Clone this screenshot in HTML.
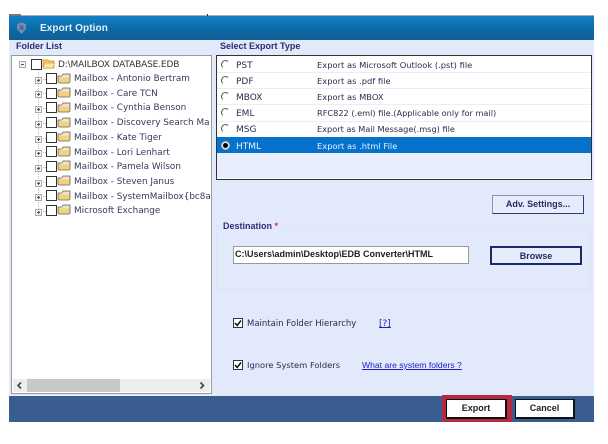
<!DOCTYPE html>
<html><head><meta charset="utf-8">
<style>
html,body{margin:0;padding:0;background:#fff;width:608px;height:444px;overflow:hidden}
body{font-family:"DejaVu Sans","Liberation Sans",sans-serif;position:relative}
.a{position:absolute;white-space:nowrap}
.t{font-size:8.35px;line-height:12px;color:#2c2c50}
.k{font-size:9px;line-height:12px;color:#2c2c50}
.m{font-size:8.85px;line-height:12px;color:#38385a;left:74px;width:136px;overflow:hidden}
.cb{position:absolute;width:9px;height:9px;background:#fff;border:1px solid #333;left:46px}
.pm{position:absolute;left:35px;width:5px;height:5px;border:1px solid #aaa;background:#f4f4f4}
.pm:before{content:"";position:absolute;left:1px;top:2px;width:3px;height:1px;background:#555}
.pm.p:after{content:"";position:absolute;left:2px;top:1px;width:1px;height:3px;background:#555}
.sep{position:absolute;left:217px;width:374px;height:1px;background:#e8edf8}
.rad{position:absolute;left:221px;width:7px;height:7px;border-radius:50%;background:#fff;border:1px solid #fff;border-left-color:#555;border-top-color:#555}
.btn{position:absolute;background:#e6ecfb;text-align:center;font-weight:bold;font-size:9px;box-sizing:border-box;color:#2a2a66;font-family:"Liberation Sans",sans-serif}
.h{position:absolute;left:39px;width:7px;height:0;border-top:1px dotted #bbb}
</style></head>
<body>
<div class="a" style="left:9px;top:15px;width:585px;height:407px;background:#e1e9fa"></div>
<div class="a" style="left:9px;top:15px;width:585px;height:1px;background:#9fb0c0"></div>
<div class="a" style="left:9px;top:14px;width:12px;height:2px;background:#777"></div>
<div class="a" style="left:207px;top:14px;width:1px;height:2px;background:#333"></div>
<div class="a" style="left:9px;top:16px;width:585px;height:24px;background:linear-gradient(#1580c8,#0b6ca8 50%,#125d93)"></div>
<svg class="a" style="left:15px;top:22px" width="13" height="13"><path d="M2 2L6.5 0.5L11 2V7L6.5 12L2 7Z" fill="#6f8fb8"/><path d="M4.5 3.5H8.5V8H4.5Z" fill="#4f6a98"/></svg>
<div class="a" style="left:40px;top:22px;font-size:10px;font-weight:bold;line-height:13px;color:#e4f0fa;font-family:'Liberation Sans',sans-serif;letter-spacing:.1px">Export Option</div>
<div class="a" style="left:16px;top:40px;font-size:9px;font-weight:bold;line-height:13px;color:#2d2d70;font-family:'Liberation Sans',sans-serif">Folder List</div>
<div class="a" style="left:220px;top:40px;font-size:9px;font-weight:bold;line-height:13px;color:#2d2d70;font-family:'Liberation Sans',sans-serif">Select Export Type</div>

<div class="a" style="left:11px;top:55px;width:199px;height:337px;background:#fff;border:1px solid #999"></div>
<div class="a" style="left:38px;top:70px;width:0;height:141px;border-left:1px dotted #bbb"></div>

<div class="pm" style="left:19px;top:61px"></div>
<div class="cb" style="left:31px;top:59px"></div>
<svg class="a" style="left:42px;top:58px" width="14" height="12"><path d="M1 2H6L7 3H12V10H1Z" fill="#f5c76a" stroke="#c8922e" stroke-width=".7"/><path d="M3 5H13L11 10H1Z" fill="#fbe3a0" stroke="#c8922e" stroke-width=".5"/></svg>
<div class="a k" style="left:58px;top:59px;color:#333;letter-spacing:-.15px">D:\MAILBOX DATABASE.EDB</div>

<div class="pm p" style="top:77px"></div><div class="h" style="top:79px"></div><div class="cb" style="top:73px"></div>
<svg class="a" style="left:57px;top:73px" width="14" height="11"><path d="M1 3H5L6 1H13V9L12 10H2L1 9Z" fill="#f3d27a" stroke="#666" stroke-width=".8"/><path d="M3 4.5L6.5 2H12V4.5Z" fill="#e6e6e6"/></svg>
<div class="a m" style="top:73px">Mailbox - Antonio Bertram</div>

<div class="pm p" style="top:91px"></div><div class="h" style="top:93px"></div><div class="cb" style="top:88px"></div>
<svg class="a" style="left:57px;top:87px" width="14" height="11"><path d="M1 3H5L6 1H13V9L12 10H2L1 9Z" fill="#f3d27a" stroke="#666" stroke-width=".8"/><path d="M3 4.5L6.5 2H12V4.5Z" fill="#e6e6e6"/></svg>
<div class="a m" style="top:88px">Mailbox - Care TCN</div>

<div class="pm p" style="top:106px"></div><div class="h" style="top:108px"></div><div class="cb" style="top:102px"></div>
<svg class="a" style="left:57px;top:102px" width="14" height="11"><path d="M1 3H5L6 1H13V9L12 10H2L1 9Z" fill="#f3d27a" stroke="#666" stroke-width=".8"/><path d="M3 4.5L6.5 2H12V4.5Z" fill="#e6e6e6"/></svg>
<div class="a m" style="top:102px">Mailbox - Cynthia Benson</div>

<div class="pm p" style="top:121px"></div><div class="h" style="top:123px"></div><div class="cb" style="top:117px"></div>
<svg class="a" style="left:57px;top:117px" width="14" height="11"><path d="M1 3H5L6 1H13V9L12 10H2L1 9Z" fill="#f3d27a" stroke="#666" stroke-width=".8"/><path d="M3 4.5L6.5 2H12V4.5Z" fill="#e6e6e6"/></svg>
<div class="a m" style="top:117px">Mailbox - Discovery Search Mailbox</div>

<div class="pm p" style="top:136px"></div><div class="h" style="top:138px"></div><div class="cb" style="top:132px"></div>
<svg class="a" style="left:57px;top:131px" width="14" height="11"><path d="M1 3H5L6 1H13V9L12 10H2L1 9Z" fill="#f3d27a" stroke="#666" stroke-width=".8"/><path d="M3 4.5L6.5 2H12V4.5Z" fill="#e6e6e6"/></svg>
<div class="a m" style="top:132px">Mailbox - Kate Tiger</div>

<div class="pm p" style="top:150px"></div><div class="h" style="top:152px"></div><div class="cb" style="top:146px"></div>
<svg class="a" style="left:57px;top:146px" width="14" height="11"><path d="M1 3H5L6 1H13V9L12 10H2L1 9Z" fill="#f3d27a" stroke="#666" stroke-width=".8"/><path d="M3 4.5L6.5 2H12V4.5Z" fill="#e6e6e6"/></svg>
<div class="a m" style="top:147px">Mailbox - Lori Lenhart</div>

<div class="pm p" style="top:165px"></div><div class="h" style="top:167px"></div><div class="cb" style="top:161px"></div>
<svg class="a" style="left:57px;top:160px" width="14" height="11"><path d="M1 3H5L6 1H13V9L12 10H2L1 9Z" fill="#f3d27a" stroke="#666" stroke-width=".8"/><path d="M3 4.5L6.5 2H12V4.5Z" fill="#e6e6e6"/></svg>
<div class="a m" style="top:161px">Mailbox - Pamela Wilson</div>

<div class="pm p" style="top:180px"></div><div class="h" style="top:182px"></div><div class="cb" style="top:176px"></div>
<svg class="a" style="left:57px;top:175px" width="14" height="11"><path d="M1 3H5L6 1H13V9L12 10H2L1 9Z" fill="#f3d27a" stroke="#666" stroke-width=".8"/><path d="M3 4.5L6.5 2H12V4.5Z" fill="#e6e6e6"/></svg>
<div class="a m" style="top:176px">Mailbox - Steven Janus</div>

<div class="pm p" style="top:194px"></div><div class="h" style="top:196px"></div><div class="cb" style="top:190px"></div>
<svg class="a" style="left:57px;top:190px" width="14" height="11"><path d="M1 3H5L6 1H13V9L12 10H2L1 9Z" fill="#f3d27a" stroke="#666" stroke-width=".8"/><path d="M3 4.5L6.5 2H12V4.5Z" fill="#e6e6e6"/></svg>
<div class="a m" style="top:191px">Mailbox - SystemMailbox{bc8a1}</div>

<div class="pm p" style="top:209px"></div><div class="h" style="top:211px"></div><div class="cb" style="top:205px"></div>
<svg class="a" style="left:57px;top:204px" width="14" height="11"><path d="M1 3H5L6 1H13V9L12 10H2L1 9Z" fill="#f3d27a" stroke="#666" stroke-width=".8"/><path d="M3 4.5L6.5 2H12V4.5Z" fill="#e6e6e6"/></svg>
<div class="a m" style="top:205px">Microsoft Exchange</div>

<div class="a" style="left:13px;top:379px;width:197px;height:13px;background:#eee"></div>
<div class="a" style="left:27px;top:379px;width:93px;height:13px;background:#c8c8c8"></div>
<svg class="a" style="left:16px;top:381px" width="8" height="9"><path d="M5 1.5L2 4.5L5 7.5" fill="none" stroke="#444" stroke-width="1.6"/></svg>
<svg class="a" style="left:198px;top:381px" width="8" height="9"><path d="M2.5 1.5L5.5 4.5L2.5 7.5" fill="none" stroke="#444" stroke-width="1.6"/></svg>

<div class="a" style="left:216px;top:55px;width:374px;height:123px;background:#fff;border:1px solid #333"></div>
<div class="sep" style="top:72px"></div><div class="sep" style="top:88px"></div><div class="sep" style="top:104px"></div><div class="sep" style="top:121px"></div>
<div class="a" style="left:217px;top:137px;width:374px;height:16px;background:#0672cc"></div>
<div class="a" style="left:217px;top:153px;width:374px;height:25px;background:#e8eefb"></div>

<div class="rad" style="top:60px"></div><div class="a k" style="left:236px;top:60px">PST</div><div class="a t" style="left:317px;top:59px">Export as Microsoft Outlook (.pst) file</div>
<div class="rad" style="top:76px"></div><div class="a k" style="left:236px;top:76px">PDF</div><div class="a t" style="left:317px;top:75px">Export as .pdf file</div>
<div class="rad" style="top:92px"></div><div class="a k" style="left:236px;top:92px">MBOX</div><div class="a t" style="left:317px;top:91px">Export as MBOX</div>
<div class="rad" style="top:108px"></div><div class="a k" style="left:236px;top:108px">EML</div><div class="a t" style="left:317px;top:107px;font-size:8.2px">RFC822 (.eml) file.(Applicable only for mail)</div>
<div class="rad" style="top:124px"></div><div class="a k" style="left:236px;top:124px">MSG</div><div class="a t" style="left:317px;top:123px;font-size:8.2px">Export as Mail Message(.msg) file</div>
<div class="rad" style="top:141px;background:#000;box-shadow:inset 0 0 0 1px #fff;border-color:#bbb"></div><div class="a k" style="left:236px;top:141px;color:#e8f2ff">HTML</div><div class="a t" style="left:317px;top:140px;color:#e8f2ff">Export as .html File</div>

<div class="btn" style="left:492px;top:195px;width:92px;height:19px;line-height:17px;border:1px solid #2a3a80;border-top-color:#8a94b8;border-left-color:#8a94b8">Adv. Settings...</div>

<div class="a" style="left:216px;top:225px;width:373px;height:62px;border:1px solid #dde5f4"></div>
<div class="a" style="left:221px;top:220px;padding:0 2px;background:#e1e9fa;font-size:9px;font-weight:bold;line-height:12px;color:#2d2d7a;font-family:'Liberation Sans',sans-serif">Destination <span style="color:#d03050">*</span></div>
<div class="a" style="left:233px;top:246px;width:234px;height:16px;background:#fff;border:1px solid #999"></div>
<div class="a" style="left:235px;top:248px;font-size:9px;font-weight:bold;line-height:12px;color:#222;font-family:'Liberation Sans',sans-serif">C:\Users\admin\Desktop\EDB Converter\HTML</div>
<div class="btn" style="left:490px;top:246px;width:92px;height:19px;line-height:16px;border:2px solid #1a2a70">Browse</div>

<svg class="a" style="left:233px;top:318px" width="10" height="10"><rect x=".5" y=".5" width="9" height="9" fill="#fff" stroke="#334"/><path d="M2 5L4.2 7.5L8 2.5" fill="none" stroke="#111" stroke-width="1.5"/></svg>
<div class="a t" style="left:247px;top:318px;font-size:8.5px">Maintain Folder Hierarchy</div>
<div class="a" style="left:379px;top:318px;font-size:9px;line-height:12px;color:#2020c8;text-decoration:underline">[?]</div>
<svg class="a" style="left:233px;top:360px" width="10" height="10"><rect x=".5" y=".5" width="9" height="9" fill="#fff" stroke="#334"/><path d="M2 5L4.2 7.5L8 2.5" fill="none" stroke="#111" stroke-width="1.5"/></svg>
<div class="a t" style="left:247px;top:359px">Ignore System Folders</div>
<div class="a" style="left:362px;top:359px;font-size:8.6px;line-height:12px;color:#2020c8;text-decoration:underline;font-family:'Liberation Sans',sans-serif">What are system folders ?</div>

<div class="a" style="left:9px;top:396px;width:585px;height:26px;background:#3a5d8f"></div>
<div class="a" style="left:442px;top:395px;width:70px;height:27px;background:#b32b3f"></div>
<div class="btn" style="left:446px;top:399px;width:61px;height:20px;line-height:17px;background:#fff;border:1px solid #111;border-width:1px 2px 2px 1px;color:#222">Export</div>
<div class="btn" style="left:515px;top:399px;width:60px;height:20px;line-height:17px;background:#fff;border:1px solid #111;border-width:1px 2px 2px 1px;color:#222">Cancel</div>
</body></html>
